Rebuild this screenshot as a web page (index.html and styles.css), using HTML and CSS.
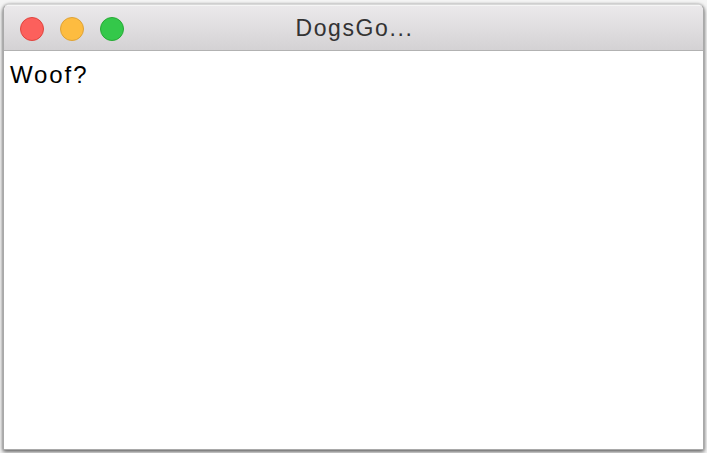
FILE: index.html
```html
<!DOCTYPE html>
<html>
<head>
<meta charset="utf-8">
<link rel="stylesheet" href="styles.css">
</head>
<body>
<div class="window">
  <div class="titlebar">
    <div class="lights">
      <span class="light red"></span>
      <span class="light yellow"></span>
      <span class="light green"></span>
    </div>
    <div class="title">DogsGo...</div>
  </div>
  <div class="content">Woof?</div>
</div>
</body>
</html>
```
FILE: styles.css
```css
html, body {
  margin: 0;
  padding: 0;
  width: 707px;
  height: 453px;
  overflow: hidden;
  background: #f4f4f4;
}
body {
  padding: 4px 3px 3px 3px;
  box-sizing: border-box;
  font-family: "Liberation Sans", Arial, sans-serif;
}
.window {
  height: 446px;
  border: 1px solid #a9a9a9;
  border-top-color: #d8d8d8;
  border-radius: 6px 6px 0 0;
  background: #fff;
  box-shadow: 0 2px 4px rgba(0,0,0,0.55), 0 0 3px rgba(0,0,0,0.25);
  display: flex;
  flex-direction: column;
  overflow: hidden;
  box-sizing: border-box;
}
.titlebar {
  position: relative;
  height: 44px;
  flex: none;
  background: linear-gradient(#ebe9eb, #d4d2d4);
  border-top: 1px solid #f5f5f5;
  border-bottom: 1px solid #b2b2b2;
  display: flex;
  align-items: center;
  justify-content: center;
}
.lights {
  position: absolute;
  left: 16px;
  top: 11px;
  display: flex;
  gap: 16px;
}
.light {
  width: 24px;
  height: 24px;
  border-radius: 50%;
  box-sizing: border-box;
}
.red { background: #fc605c; border: 1px solid #e0443e; }
.yellow { background: #fdbc40; border: 1px solid #dea236; }
.green { background: #34c84a; border: 1px solid #27aa35; }
.title {
  font-size: 23px;
  letter-spacing: 1.6px;
  color: #333;
  margin-left: 2px;
  padding-top: 1px;
}
.content {
  flex: 1;
  padding: 9px 6px;
  font-size: 24px;
  letter-spacing: 1.9px;
  color: #000;
  line-height: 30px;
}
```
